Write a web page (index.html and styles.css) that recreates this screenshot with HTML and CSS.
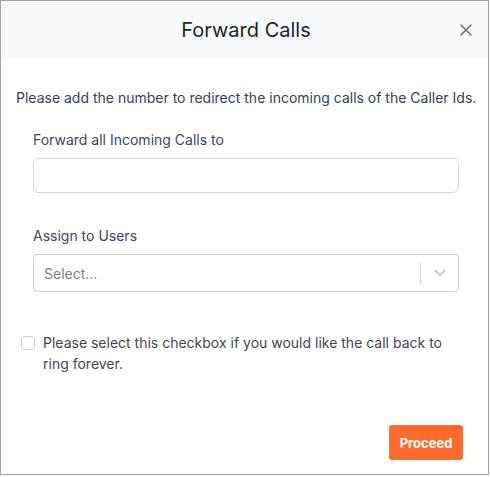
FILE: index.html
```html
<!DOCTYPE html>
<html>
<head>
<meta charset="utf-8">
<link rel="stylesheet" href="styles.css">
</head>
<body>
<div class="modal">
  <div class="modal-header">
    <h2 class="modal-title">Forward Calls</h2>
    <button class="close-btn" aria-label="Close">
      <svg width="12" height="12" viewBox="0 0 12 12"><path d="M1 1L11 11M11 1L1 11" stroke="#6b7280" stroke-width="1.6" stroke-linecap="round"/></svg>
    </button>
  </div>
  <div class="modal-body">
    <p class="intro">Please add the number to redirect the incoming calls of the Caller Ids.</p>
    <div class="field">
      <label class="field-label">Forward all Incoming Calls to</label>
      <input class="text-input" type="text">
    </div>
    <div class="field field-users">
      <label class="field-label">Assign to Users</label>
      <div class="select">
        <span class="select-placeholder">Select...</span>
        <span class="select-sep"></span>
        <span class="select-arrow">
          <svg width="12" height="8" viewBox="0 0 12 8"><path d="M1.5 1.5L6 6L10.5 1.5" fill="none" stroke="#cccccc" stroke-width="2" stroke-linecap="round" stroke-linejoin="round"/></svg>
        </span>
      </div>
    </div>
    <label class="check-row">
      <span class="checkbox"></span>
      <span class="check-text">Please select this checkbox if you would like the call back to ring forever.</span>
    </label>
  </div>
  <div class="modal-footer">
    <button class="proceed">Proceed</button>
  </div>
</div>
</body>
</html>
```
FILE: styles.css
```css
* { box-sizing: border-box; }
html, body { margin: 0; padding: 0; background: #fff; }
body { font-family: Inter, "Noto Sans", sans-serif; }
.modal {
  width: 489px;
  height: 475px;
  border: 1px solid #a3a3a3;
  display: flex;
  flex-direction: column;
  background: #fff;
}
.modal-header {
  height: 58px;
  background: #f8f9fb;
  display: flex;
  align-items: center;
  justify-content: center;
  position: relative;
}
.modal-title {
  margin: 0 0 0 3px;
  font-size: 20px;
  font-weight: 400;
  color: #212529;
}
.close-btn {
  position: absolute;
  right: 16px;
  top: 23px;
  width: 12px;
  height: 12px;
  padding: 0;
  border: 0;
  background: none;
  display: flex;
}
.modal-body {
  padding: 28px 0 0 15px;
  flex: 1;
}
.intro {
  margin: 0;
  font-size: 14px;
  line-height: 21px;
  color: #374151;
  white-space: nowrap;
}
.field {
  padding: 0 29px 0 17px;
  margin-top: 21px;
}
.field-users { margin-top: 32px; }
.field-label {
  display: block;
  font-size: 14px;
  line-height: 21px;
  color: #3f4656;
  margin-bottom: 8px;
}
.text-input {
  display: block;
  width: 100%;
  height: 35px;
  border: 1px solid #d3d6e2;
  border-radius: 6px;
  font: inherit;
}
.select {
  height: 38px;
  border: 1px solid #cccccc;
  border-radius: 4px;
  display: flex;
  align-items: center;
  padding-left: 10px;
}
.select-placeholder {
  flex: 1;
  font-size: 14px;
  color: #808080;
}
.select-sep {
  width: 1px;
  height: 20px;
  background: #cccccc;
}
.select-arrow {
  width: 37px;
  display: flex;
  justify-content: center;
  align-items: center;
}
.check-row {
  display: flex;
  align-items: flex-start;
  gap: 8px;
  margin-top: 40px;
  padding-left: 5px;
  padding-right: 34px;
}
.checkbox {
  flex: none;
  width: 14px;
  height: 14px;
  margin-top: 4px;
  border: 1px solid #cbd0da;
  border-radius: 3px;
  background: #fff;
}
.check-text {
  font-size: 14px;
  line-height: 21px;
  color: #3f4656;
}
.modal-footer {
  display: flex;
  justify-content: flex-end;
  padding: 0 25px 14px 0;
}
.proceed {
  width: 74px;
  height: 35px;
  background: #ff6b2c;
  color: #fff;
  border: 0;
  border-radius: 3px;
  font-family: Inter, sans-serif;
  font-weight: 700;
  font-size: 13px;
}
```
